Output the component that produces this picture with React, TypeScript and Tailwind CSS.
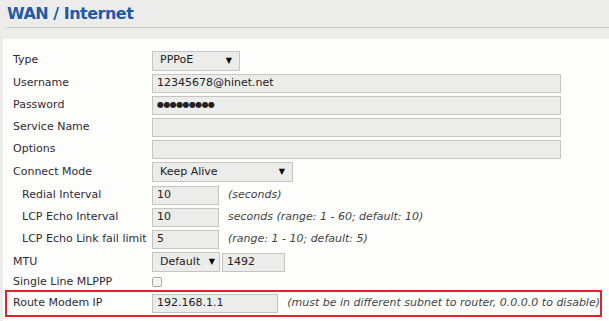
import React from "react";

const font = { fontFamily: '"DejaVu Sans", Verdana, sans-serif' };

type RowProps = {
  label: string;
  indent?: boolean;
  h: string;
  children?: React.ReactNode;
};

const Row = ({ label, indent, h, children }: RowProps) => (
  <div className={`flex items-center pl-[8px] ${h}`}>
    <div className={`w-[139px] shrink-0 ${indent ? "pl-[9px]" : ""}`}>{label}</div>
    <div className="flex items-center">{children}</div>
  </div>
);

const TextBox = ({ value, w, dots }: { value?: string; w: string; dots?: boolean }) => (
  <div
    className={`h-[19px] ${w} border border-[#c4c4c2] bg-[#ececea] pl-[4px] flex items-center text-[#222] ${
      dots ? "text-[8px] tracking-[-0.6px]" : ""
    }`}
  >
    {value}
  </div>
);

const Select = ({ value, w, pr }: { value: string; w: string; pr: string }) => (
  <div
    className={`h-[20px] ${w} border border-[#c4c4c2] bg-[#ececea] pl-[7px] ${pr} flex items-center justify-between text-[#222]`}
  >
    <span>{value}</span>
    <span className="text-[8px] text-black">▼</span>
  </div>
);

const Note = ({ children }: { children: React.ReactNode }) => (
  <span className="ml-[9px] italic text-[#444] whitespace-nowrap">{children}</span>
);

export default function App() {
  return (
    <div className="w-[609px] h-[321px] bg-[#ececea] overflow-hidden text-[11px] text-[#302a33]" style={font}>
      <div className="h-[39px] pl-[7px]">
        <div className="h-[28px] flex items-center border-b border-[#c8c8c6]">
          <h1 className="text-[16px] font-bold text-[#1f5aa6] tracking-[-0.5px] pt-[1px]">WAN / Internet</h1>
        </div>
      </div>
      <div className="ml-[3px] h-[282px] bg-[#fdfefc] pt-[10px] pl-[2px] pr-[7px]">
        <Row label="Type" h="h-[23px]">
          <Select value="PPPoE" w="w-[88px]" pr="pr-[7px]" />
        </Row>
        <Row label="Username" h="h-[22px]">
          <TextBox value="12345678@hinet.net" w="w-[409px]" />
        </Row>
        <Row label="Password" h="h-[22px]">
          <TextBox value="●●●●●●●●●" w="w-[409px]" dots />
        </Row>
        <Row label="Service Name" h="h-[22px]">
          <TextBox w="w-[409px]" />
        </Row>
        <Row label="Options" h="h-[22px]">
          <TextBox w="w-[409px]" />
        </Row>
        <Row label="Connect Mode" h="h-[24px]">
          <Select value="Keep Alive" w="w-[141px]" pr="pr-[7px]" />
        </Row>
        <Row label="Redial Interval" indent h="h-[22px]">
          <TextBox value="10" w="w-[67px]" />
          <Note>(seconds)</Note>
        </Row>
        <Row label="LCP Echo Interval" indent h="h-[22px]">
          <TextBox value="10" w="w-[67px]" />
          <Note>seconds (range: 1 - 60; default: 10)</Note>
        </Row>
        <Row label="LCP Echo Link fail limit" indent h="h-[22px]">
          <TextBox value="5" w="w-[67px]" />
          <Note>(range: 1 - 10; default: 5)</Note>
        </Row>
        <Row label="MTU" h="h-[24px]">
          <Select value="Default" w="w-[68px]" pr="pr-[4px]" />
          <div className="ml-[2px]">
            <TextBox value="1492" w="w-[63px]" />
          </div>
        </Row>
        <Row label="Single Line MLPPP" h="h-[16px]">
          <div className="w-[10px] h-[10px] rounded-[2px] border border-[#a8a8a8] bg-[#f4f4f2]" />
        </Row>
        <div className="border-2 border-[#e3232b] h-[27px] flex items-center pl-[6px]">
          <div className="w-[139px] shrink-0">Route Modem IP</div>
          <TextBox value="192.168.1.1" w="w-[127px]" />
          <Note>(must be in different subnet to router, 0.0.0.0 to disable)</Note>
        </div>
      </div>
    </div>
  );
}
